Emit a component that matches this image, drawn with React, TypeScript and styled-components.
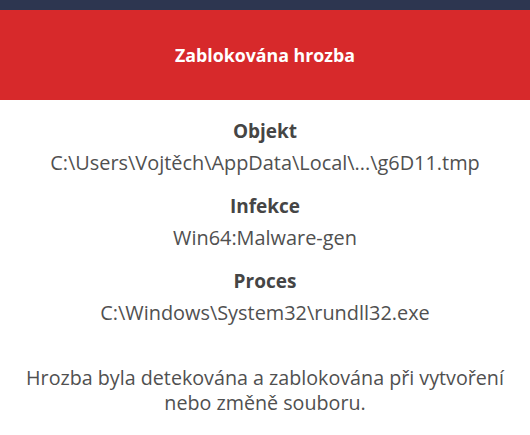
import React from "react";
import styled, { createGlobalStyle } from "styled-components";

const GlobalStyle = createGlobalStyle`
  html, body {
    margin: 0;
    padding: 0;
    background: #ffffff;
  }
  body {
    font-family: "Open Sans", "Noto Sans", "Liberation Sans", sans-serif;
  }
`;

const Window = styled.div`
  width: 530px;
  height: 435px;
  overflow: hidden;
  display: flex;
  flex-direction: column;
  background: #ffffff;
`;

const TopBar = styled.div`
  height: 10px;
  background: #2d3650;
`;

const Banner = styled.div`
  height: 90px;
  background: #d7292b;
  display: flex;
  align-items: center;
  justify-content: center;
  color: #ffffff;
  font-weight: 700;
  font-size: 17.8px;
`;

const Body = styled.div`
  display: flex;
  flex-direction: column;
  align-items: center;
  padding-top: 16px;
  color: #464646;
  text-align: center;
`;

const Field = styled.div`
  display: flex;
  flex-direction: column;
  align-items: center;
  margin-bottom: 13px;
`;

const Label = styled.div`
  font-weight: 700;
  font-size: 19px;
  line-height: 31px;
  color: #454545;
`;

const Value = styled.div`
  font-size: 19.9px;
  line-height: 31px;
  color: #505050;
`;

const Note = styled.p`
  margin: 24px 0 0;
  width: 500px;
  font-size: 19.7px;
  line-height: 25px;
  color: #505050;
`;

const fields = [
  { label: "Objekt", value: "C:\\Users\\Vojtěch\\AppData\\Local\\...\\g6D11.tmp" },
  { label: "Infekce", value: "Win64:Malware-gen" },
  { label: "Proces", value: "C:\\Windows\\System32\\rundll32.exe" },
];

const App: React.FC = () => {
  return (
    <>
      <GlobalStyle />
      <Window>
        <TopBar />
        <Banner>Zablokována hrozba</Banner>
        <Body>
          {fields.map((f) => (
            <Field key={f.label}>
              <Label>{f.label}</Label>
              <Value>{f.value}</Value>
            </Field>
          ))}
          <Note>Hrozba byla detekována a zablokována při vytvoření nebo změně souboru.</Note>
        </Body>
      </Window>
    </>
  );
};

export default App;
